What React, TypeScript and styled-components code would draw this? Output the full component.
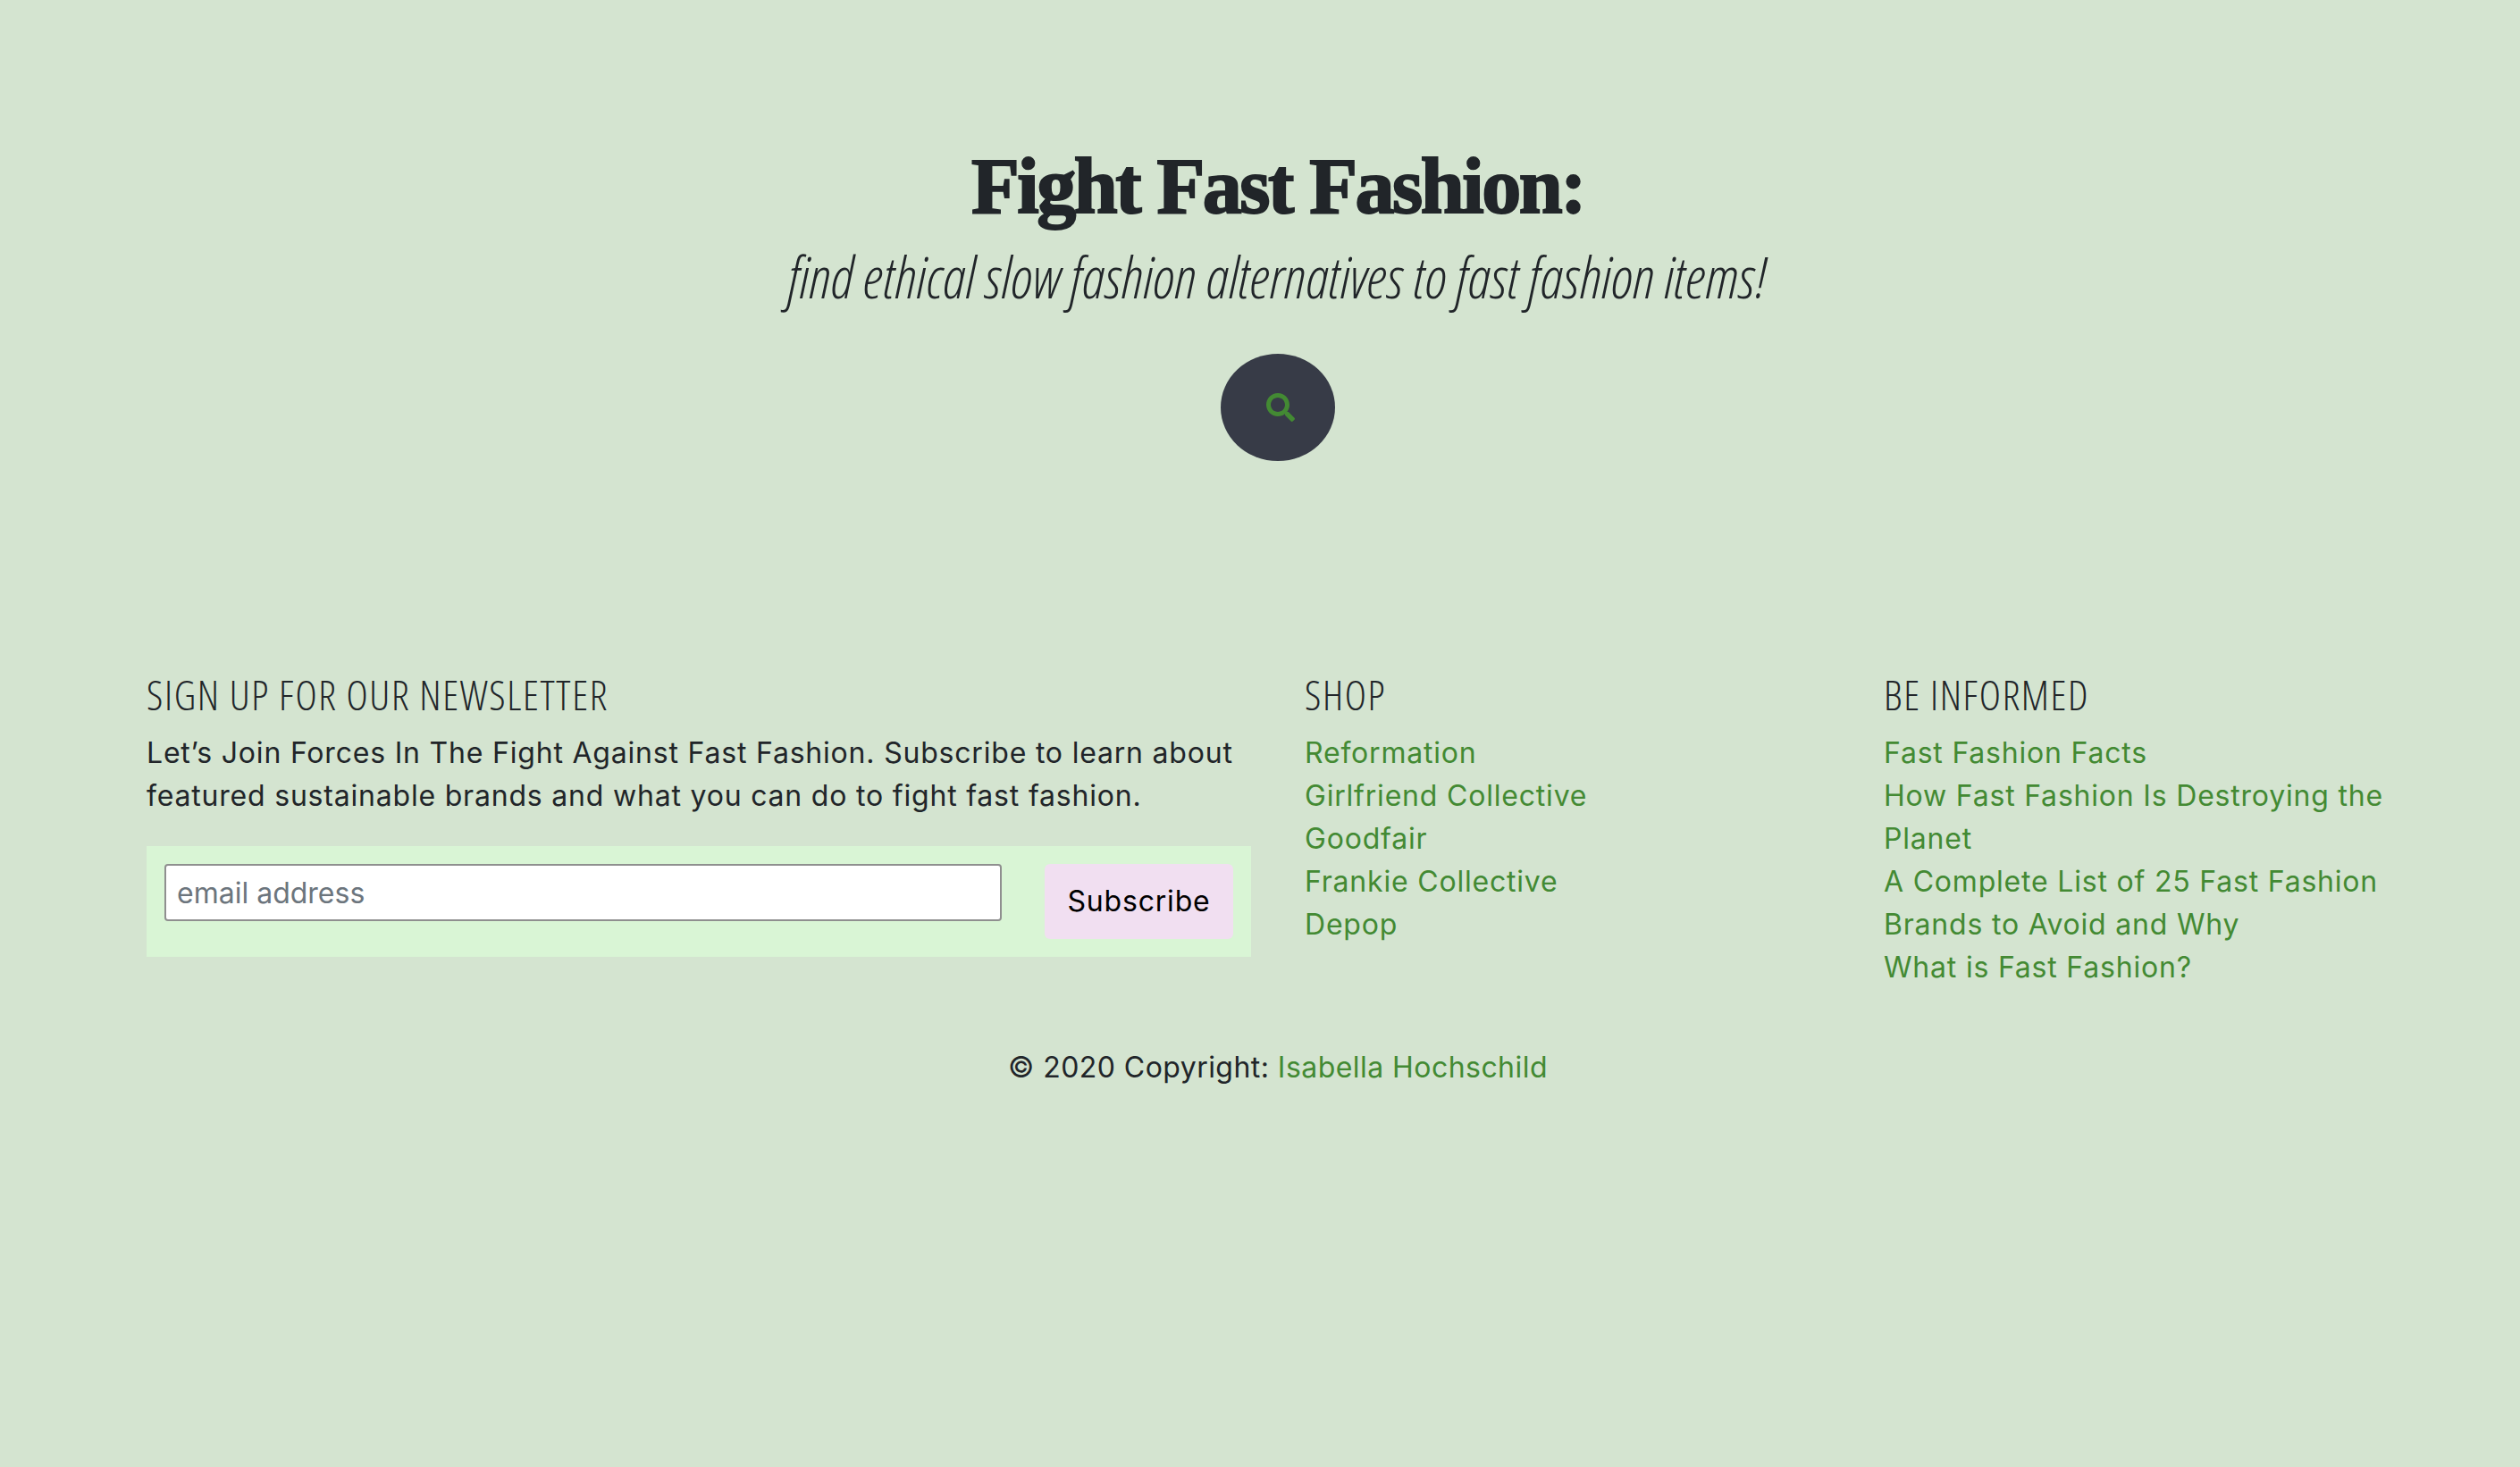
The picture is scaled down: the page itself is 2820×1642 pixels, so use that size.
import React from "react";
import styled, { createGlobalStyle } from "styled-components";
import { FaSearch } from "react-icons/fa";

const shopLinks = ["Reformation", "Girlfriend Collective", "Goodfair", "Frankie Collective", "Depop"];
const infoLinks = [
  "Fast Fashion Facts",
  "How Fast Fashion Is Destroying the Planet",
  "A Complete List of 25 Fast Fashion Brands to Avoid and Why",
  "What is Fast Fashion?",
];

export default function App() {
  return (
    <>
      <GlobalStyle />
      <Page>
        <Hero>
          <Title>Fight Fast Fashion:</Title>
          <Subtitle>find ethical slow fashion alternatives to fast fashion items!</Subtitle>
          <SearchButton aria-label="search">
            <FaSearch />
          </SearchButton>
        </Hero>
        <Footer>
          <NewsColumn>
            <ColumnTitle>Sign up for our newsletter</ColumnTitle>
            <Blurb>
              Let’s Join Forces In The Fight Against Fast Fashion. Subscribe to learn about featured
              sustainable brands and what you can do to fight fast fashion.
            </Blurb>
            <SignupForm onSubmit={(e) => e.preventDefault()}>
              <EmailInput type="email" placeholder="email address" />
              <SubscribeButton type="submit">Subscribe</SubscribeButton>
            </SignupForm>
          </NewsColumn>
          <LinkColumn>
            <ColumnTitle>Shop</ColumnTitle>
            <LinkList>
              {shopLinks.map((l) => (
                <li key={l}>
                  <TextLink href="#">{l}</TextLink>
                </li>
              ))}
            </LinkList>
          </LinkColumn>
          <LinkColumn>
            <ColumnTitle>Be informed</ColumnTitle>
            <LinkList>
              {infoLinks.map((l) => (
                <li key={l}>
                  <TextLink href="#">{l}</TextLink>
                </li>
              ))}
            </LinkList>
          </LinkColumn>
        </Footer>
        <Copyright>
          © 2020 Copyright: <TextLink href="#">Isabella Hochschild</TextLink>
        </Copyright>
      </Page>
    </>
  );
}

const GlobalStyle = createGlobalStyle`
  html, body {
    margin: 0;
    background: #d4e4d0;
  }
  body {
    font-family: Inter, "Liberation Sans", sans-serif;
    font-size: 32px;
    line-height: 48px;
    letter-spacing: 0.8px;
    color: #212529;
  }
`;

const Page = styled.div`
  width: 2592px;
  min-height: 1642px;
  margin-left: 134px;
  box-sizing: border-box;
  padding-top: 161px;
`;

const Hero = styled.header`
  display: flex;
  flex-direction: column;
  align-items: center;
`;

const Title = styled.h1`
  margin: 0;
  font-family: "Liberation Serif", serif;
  font-weight: 700;
  font-size: 88px;
  line-height: 96px;
  letter-spacing: -2.5px;
  color: #212529;
  -webkit-text-stroke: 2px #212529;
`;

const Subtitle = styled.p`
  margin: 12px 0 0;
  font-family: "Open Sans", sans-serif;
  font-style: italic;
  font-weight: 300;
  font-stretch: 75%;
  font-size: 64.4px;
  line-height: 80px;
  letter-spacing: 0;
`;

const SearchButton = styled.button`
  width: 128px;
  height: 120px;
  margin-top: 47px;
  padding: 0 0 0 6px;
  border: none;
  border-radius: 50%;
  background: #373b47;
  color: #438a33;
  font-size: 32px;
  display: flex;
  align-items: center;
  justify-content: center;
`;

const Footer = styled.footer`
  display: grid;
  grid-template-columns: 1296px 648px 648px;
  margin-top: 237px;
`;

const NewsColumn = styled.section`
  padding: 0 30px;
`;

const LinkColumn = styled.section`
  padding: 0 30px;
`;

const ColumnTitle = styled.h5`
  margin: 0 0 18px;
  font-family: "Open Sans", sans-serif;
  font-weight: 300;
  font-stretch: 75%;
  font-size: 46px;
  line-height: 48px;
  letter-spacing: 1.6px;
  text-transform: uppercase;
`;

const Blurb = styled.p`
  margin: 0;
`;

const SignupForm = styled.form`
  display: flex;
  align-items: flex-start;
  gap: 48px;
  margin-top: 32px;
  padding: 20px;
  background: #d9f5d5;
`;

const EmailInput = styled.input`
  flex: 1;
  height: 64px;
  box-sizing: border-box;
  padding: 0 12px;
  border: 2px solid #8f8f8f;
  border-radius: 4px;
  background: #fff;
  font: inherit;
  &::placeholder {
    color: #6c757d;
  }
`;

const SubscribeButton = styled.button`
  width: 211px;
  height: 84px;
  padding: 0;
  border: none;
  border-radius: 6px;
  background: #f1dff1;
  color: #000;
  font: inherit;
  letter-spacing: 0.8px;
`;

const LinkList = styled.ul`
  margin: 0;
  padding: 0;
  list-style: none;
`;

const TextLink = styled.a`
  color: #438a33;
  text-decoration: none;
`;

const Copyright = styled.div`
  margin-top: 64px;
  text-align: center;
  letter-spacing: 0.45px;
`;
